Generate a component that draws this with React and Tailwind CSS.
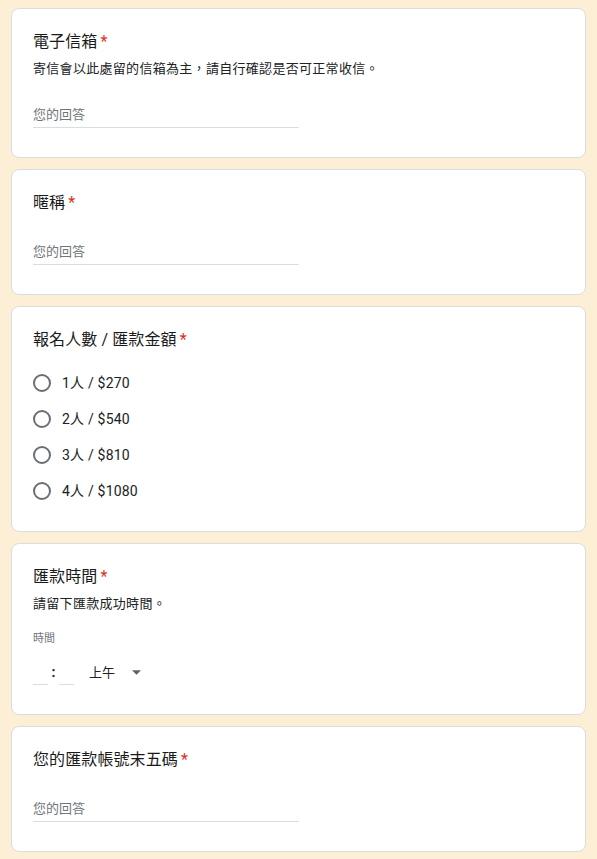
const FONT = { fontFamily: 'Roboto, "Noto Sans CJK TC", "Noto Sans", sans-serif' }

function Card({ className = '', children }) {
  return (
    <div className={`bg-white border border-[#dadce0] rounded-lg px-[21px] pt-[21px] ${className}`}>
      {children}
    </div>
  )
}

function Title({ children }) {
  return (
    <div className="text-[16px] leading-6 text-[#1a1a1a] tracking-[0.1px]">
      {children}
      <span className="text-[#d93025] ml-[3px]">*</span>
    </div>
  )
}

function Desc({ children }) {
  return <div className="text-[13px] leading-5 tracking-[0.3px] text-[#202124] mt-[5px]">{children}</div>
}

function ShortAnswer({ className = '' }) {
  return (
    <div className={`w-1/2 border-b border-[#dadce0] pb-[2px] text-[13px] leading-5 text-[#70757a] ${className}`}>
      您的回答
    </div>
  )
}

const options = ['1人 / $270', '2人 / $540', '3人 / $810', '4人 / $1080']

export default function App() {
  return (
    <div className="min-h-screen bg-[#fdefd5] px-[11px] pt-[8px] pb-[8px]" style={FONT}>
      <div className="flex flex-col gap-[11px]">
        <Card className="pb-[29px]">
          <Title>電子信箱</Title>
          <Desc>寄信會以此處留的信箱為主，請自行確認是否可正常收信。</Desc>
          <ShortAnswer className="mt-[26px]" />
        </Card>

        <Card className="pb-[29px]">
          <Title>暱稱</Title>
          <ShortAnswer className="mt-[27px]" />
        </Card>

        <Card className="pb-[22px]">
          <Title>報名人數 / 匯款金額</Title>
          <div className="mt-[13px] flex flex-col">
            {options.map((o) => (
              <label key={o} className="h-9 flex items-center gap-[11px]">
                <span className="w-[18px] h-[18px] rounded-full border-2 border-[#6b6f74] shrink-0" />
                <span className="text-[14px] text-[#202124] tracking-[0.2px]">{o}</span>
              </label>
            ))}
          </div>
        </Card>

        <Card className="pb-[29px]">
          <Title>匯款時間</Title>
          <Desc>請留下匯款成功時間。</Desc>
          <div className="mt-[17px] text-[11px] leading-4 text-[#70757a]">時間</div>
          <div className="mt-[13px] flex items-center h-[25px]">
            <div className="w-[15px] h-[25px] border-b border-[#dadce0]" />
            <div className="w-[11px] text-center text-[14px] text-[#202124] font-bold">:</div>
            <div className="w-[15px] h-[25px] border-b border-[#dadce0]" />
            <div className="ml-[15px] text-[13px] text-[#202124]">上午</div>
            <svg width="9" height="5" viewBox="0 0 10 5" className="ml-[17px]">
              <path d="M0 0 L10 0 L5 5 Z" fill="#5f6368" />
            </svg>
          </div>
        </Card>

        <Card className="pb-[29px]">
          <Title>您的匯款帳號末五碼</Title>
          <ShortAnswer className="mt-[27px]" />
        </Card>
      </div>
    </div>
  )
}
